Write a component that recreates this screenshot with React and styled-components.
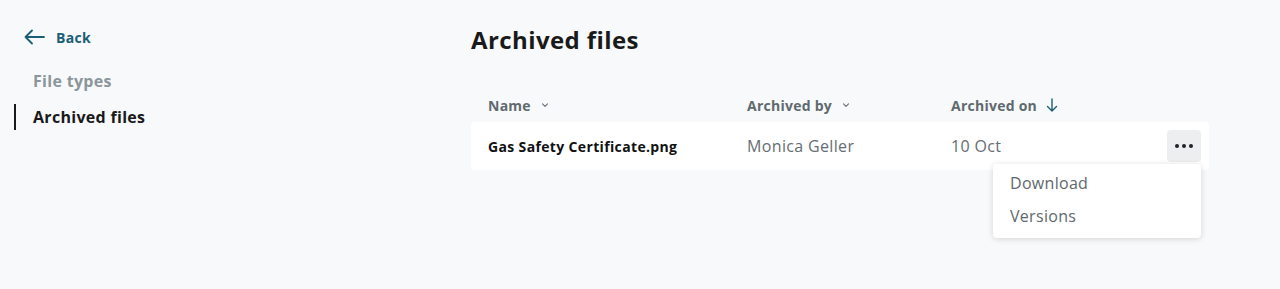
import React from 'react'
import styled, { createGlobalStyle } from 'styled-components'

const GlobalStyle = createGlobalStyle`
  body {
    margin: 0;
    background: #f8f9fa;
    font-family: "Open Sans", "Noto Sans", sans-serif;
    color: #1a1a1a;
    letter-spacing: 0.3px;
  }
`

const Page = styled.div`
  display: flex;
  height: 289px;
`

const Sidebar = styled.nav`
  width: 471px;
  flex-shrink: 0;
  padding: 26px 0 0 14px;
  box-sizing: border-box;
`

const BackLink = styled.a`
  display: flex;
  align-items: center;
  gap: 11px;
  padding-left: 10px;
  color: #1b5e78;
  font-size: 14px;
  font-weight: 700;
  height: 22px;
  text-decoration: none;
`

const NavList = styled.div`
  margin-top: 20px;
  display: flex;
  flex-direction: column;
  gap: 10px;
`

const NavItem = styled.div`
  font-size: 16px;
  font-weight: 700;
  line-height: 26px;
  padding-left: 17px;
  border-left: 2px solid ${p => (p.active ? '#1a1a1a' : 'transparent')};
  color: ${p => (p.active ? '#1a1a1a' : '#8b969b')};
`

const Main = styled.main`
  width: 738px;
  padding-top: 24px;
`

const Title = styled.h1`
  margin: 0;
  font-size: 24px;
  font-weight: 700;
  line-height: 32px;
  letter-spacing: 0.4px;
  color: #1a1a1a;
`

const Table = styled.div`
  margin-top: 37px;
`

const Columns = styled.div`
  display: grid;
  grid-template-columns: 259px 204px 1fr auto;
  align-items: center;
  padding: 0 8px 0 17px;
`

const HeaderRow = styled(Columns)`
  height: 24px;
  margin-bottom: 5px;
`

const HeaderCell = styled.div`
  display: flex;
  align-items: center;
  gap: 9px;
  font-size: 14px;
  font-weight: 700;
  letter-spacing: 0.25px;
  color: #5f6a6f;
`

const Row = styled(Columns)`
  height: 48px;
  background: #fff;
  border-radius: 4px;
  position: relative;
`

const NameCell = styled.div`
  font-size: 14px;
  font-weight: 700;
  letter-spacing: 0.35px;
  color: #111;
`

const Cell = styled.div`
  font-size: 16px;
  letter-spacing: 0.35px;
  color: #646e73;
`

const MoreButton = styled.button`
  width: 34px;
  height: 32px;
  border: none;
  border-radius: 4px;
  background: #eceef0;
  display: flex;
  align-items: center;
  justify-content: center;
  gap: 3px;
  padding: 0;
`

const Dot = styled.span`
  width: 4px;
  height: 4px;
  border-radius: 50%;
  background: #1d2327;
`

const Menu = styled.div`
  position: absolute;
  top: 42px;
  right: 8px;
  width: 208px;
  background: #fff;
  border-radius: 4px;
  box-shadow: 0 1px 6px rgba(0, 0, 0, 0.15);
  padding: 3px 0 5px;
  z-index: 2;
`

const MenuItem = styled.div`
  font-size: 16px;
  color: #5e686d;
  line-height: 33px;
  padding-left: 17px;
`

const Chevron = () => (
  <svg width="10" height="10" viewBox="0 0 10 10" fill="none">
    <path d="M2.5 3.8 5 6.3 7.5 3.8" stroke="#6b767b" strokeWidth="1.2" strokeLinecap="round" strokeLinejoin="round" />
  </svg>
)

const ArrowDown = () => (
  <svg width="12" height="14" viewBox="0 0 12 14" fill="none">
    <path d="M6 1v12M1.5 8.5 6 13l4.5-4.5" stroke="#1b5e78" strokeWidth="1.4" strokeLinecap="round" strokeLinejoin="round" />
  </svg>
)

const ArrowLeft = () => (
  <svg width="21" height="16" viewBox="0 0 21 16" fill="none">
    <path d="M20 8H1.5M8 1.5 1.5 8 8 14.5" stroke="#1b5e78" strokeWidth="1.8" strokeLinecap="round" strokeLinejoin="round" />
  </svg>
)

export default function App() {
  return (
    <>
      <GlobalStyle />
      <Page>
        <Sidebar>
          <BackLink href="#">
            <ArrowLeft />
            Back
          </BackLink>
          <NavList>
            <NavItem>File types</NavItem>
            <NavItem active>Archived files</NavItem>
          </NavList>
        </Sidebar>
        <Main>
          <Title>Archived files</Title>
          <Table>
            <HeaderRow>
              <HeaderCell>Name <Chevron /></HeaderCell>
              <HeaderCell>Archived by <Chevron /></HeaderCell>
              <HeaderCell>Archived on <ArrowDown /></HeaderCell>
              <div />
            </HeaderRow>
            <Row>
              <NameCell>Gas Safety Certificate.png</NameCell>
              <Cell>Monica Geller</Cell>
              <Cell>10 Oct</Cell>
              <MoreButton aria-label="More">
                <Dot /><Dot /><Dot />
              </MoreButton>
              <Menu>
                <MenuItem>Download</MenuItem>
                <MenuItem>Versions</MenuItem>
              </Menu>
            </Row>
          </Table>
        </Main>
      </Page>
    </>
  )
}
